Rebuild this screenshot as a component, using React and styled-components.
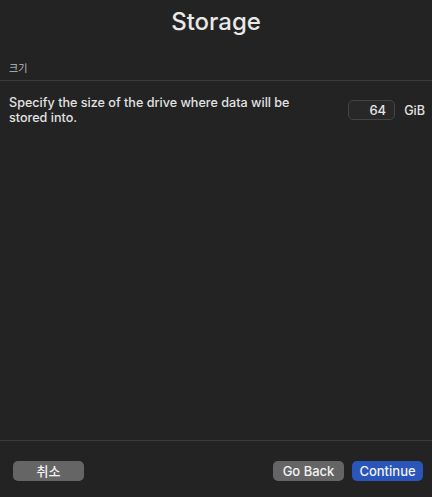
import styled, { createGlobalStyle } from "styled-components";

const GlobalStyle = createGlobalStyle`
  html, body {
    margin: 0;
    padding: 0;
    background: #232323;
  }
  body {
    font-family: Inter, "Noto Sans CJK KR", "Liberation Sans", sans-serif;
    color: #e4e4e4;
    -webkit-font-smoothing: antialiased;
  }
`;

const Window = styled.div`
  display: flex;
  flex-direction: column;
  height: 100vh;
  background: #232323;
`;

const Title = styled.h1`
  margin: 0;
  height: 44px;
  line-height: 44px;
  text-align: center;
  font-size: 24px;
  font-weight: 500;
  color: #e8e8e8;
`;

const SectionHeader = styled.div`
  display: flex;
  align-items: flex-end;
  height: 36px;
  padding: 0 9px 6px;
  box-sizing: border-box;
  font-size: 10px;
  line-height: 12px;
  color: #bdbdbd;
`;

const Divider = styled.div`
  height: 1px;
  background: #3b3b3b;
`;

const Row = styled.div`
  display: flex;
  align-items: center;
  justify-content: space-between;
  gap: 16px;
  padding: 14px 7px 0 9px;
`;

const Description = styled.p`
  margin: 0;
  width: 300px;
  font-size: 12.6px;
  line-height: 15px;
  font-weight: 500;
  color: #e2e2e2;
`;

const SizeField = styled.div`
  display: flex;
  align-items: center;
  gap: 9px;
`;

const NumberBox = styled.div`
  width: 47px;
  height: 20px;
  box-sizing: border-box;
  border: 1px solid #454545;
  border-radius: 5px;
  background: #282828;
  padding-right: 8px;
  text-align: right;
  font-size: 13px;
  line-height: 18px;
  font-weight: 500;
  color: #e6e6e6;
`;

const Unit = styled.span`
  font-size: 12.6px;
  font-weight: 500;
  color: #e2e2e2;
`;

const Spacer = styled.div`
  flex: 1;
`;

const Footer = styled.div`
  display: flex;
  align-items: flex-start;
  height: 56px;
  padding: 20px 9px 0 13px;
  box-sizing: border-box;
`;

const ButtonGroup = styled.div`
  display: flex;
  gap: 8px;
  margin-left: auto;
`;

const Button = styled.button`
  width: 71px;
  height: 20px;
  padding: 0;
  border: none;
  border-radius: 5px;
  background: ${({ primary }) => (primary ? "#2a55ba" : "#656565")};
  color: #f2f2f2;
  font-family: inherit;
  font-size: 13px;
  font-weight: 500;
  line-height: 20px;
`;

const App = () => {
  return (
    <>
      <GlobalStyle />
      <Window>
        <Title>Storage</Title>
        <SectionHeader>크기</SectionHeader>
        <Divider />
        <Row>
          <Description>
            Specify the size of the drive where data will be stored into.
          </Description>
          <SizeField>
            <NumberBox>64</NumberBox>
            <Unit>GiB</Unit>
          </SizeField>
        </Row>
        <Spacer />
        <Divider />
        <Footer>
          <Button>취소</Button>
          <ButtonGroup>
            <Button>Go Back</Button>
            <Button primary>Continue</Button>
          </ButtonGroup>
        </Footer>
      </Window>
    </>
  );
};

export default App;
